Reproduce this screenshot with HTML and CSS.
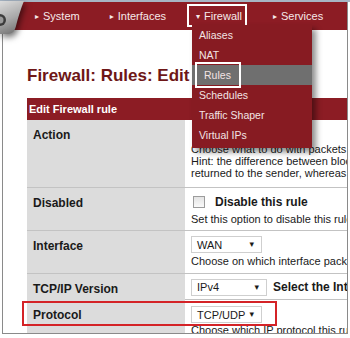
FILE: index.html
```html
<!DOCTYPE html>
<html lang="en">
<head>
    <meta charset="UTF-8">
    <title>Firewall: Rules: Edit</title>
    <link rel="stylesheet" href="styles.css">
</head>
<body>
    <div class="topline"></div>
    <div class="frame">
        <div class="header">
            <ul class="nav">
                <li><span class="arr">&#9656;</span>System</li>
                <li><span class="arr">&#9656;</span>Interfaces</li>
                <li class="open"><span class="arr">&#9662;</span>Firewall
                    <ul class="menu">
                        <li>Aliases</li>
                        <li>NAT</li>
                        <li class="active"><span class="mark">Rules</span></li>
                        <li>Schedules</li>
                        <li>Traffic Shaper</li>
                        <li>Virtual IPs</li>
                    </ul>
                </li>
                <li><span class="arr">&#9656;</span>Services</li>
                <li><span class="arr">&#9656;</span>VPN</li>
            </ul>
        </div>

        <div class="main">
            <h1>Firewall: Rules: Edit</h1>
            <div class="form">
                <div class="form-head">Edit Firewall rule</div>

                <div class="row row-action">
                    <div class="label">Action</div>
                    <div class="field">
                        <div class="desc">Choose what to do with packets that match the criteria specified below.<br>
                        Hint: the difference between block and reject is that with reject, a packet (TCP RST or ICMP port unreachable for UDP) is<br>
                        returned to the sender, whereas with block the packet is dropped silently.</div>
                    </div>
                </div>

                <div class="row">
                    <div class="label">Disabled</div>
                    <div class="field">
                        <div class="check-line"><span class="checkbox"></span><b>Disable this rule</b></div>
                        <div class="desc">Set this option to disable this rule without removing it from the list.</div>
                    </div>
                </div>

                <div class="row">
                    <div class="label">Interface</div>
                    <div class="field">
                        <div class="select sel-wan">WAN<span class="caret">&#9662;</span></div>
                        <div class="desc">Choose on which interface packets must come in to match this rule.</div>
                    </div>
                </div>

                <div class="row row-short">
                    <div class="label">TCP/IP Version</div>
                    <div class="field inline">
                        <div class="select sel-ip">IPv4<span class="caret">&#9662;</span></div>
                        <b>Select the Internet Protocol version this rule applies to</b>
                    </div>
                </div>

                <div class="row row-proto">
                    <div class="label">Protocol</div>
                    <div class="field">
                        <div class="select sel-proto">TCP/UDP<span class="caret">&#9662;</span></div>
                        <div class="desc">Choose which IP protocol this rule should match.</div>
                    </div>
                    <div class="callout"></div>
                </div>
            </div>
        </div>
    </div>

    <svg class="logo" width="32" height="44" viewBox="0 0 32 44">
        <defs>
            <linearGradient id="lg" x1="0" y1="0" x2="0.3" y2="1">
                <stop offset="0" stop-color="#dcdcdc"/>
                <stop offset="0.6" stop-color="#a9a9a9"/>
                <stop offset="1" stop-color="#7c7c7c"/>
            </linearGradient>
        </defs>
        <path d="M0 0 H24 C21 7 18 17 16 25 C14.5 31 12 33 7 33 H0 Z" fill="url(#lg)"/>
        <path d="M0 13 A6 6 0 0 1 0 25 Z" fill="#3c3c3c"/>
        <path d="M0 15.5 A3.5 3.5 0 0 1 0 22.5 Z" fill="#9a9a9a"/>
    </svg>
</body>
</html>
```

FILE: styles.css
```css
* {
    margin: 0;
    padding: 0;
    box-sizing: border-box;
}
body {
    width: 350px;
    height: 338px;
    overflow: hidden;
    position: relative;
    background: #fff;
    font-family: 'Liberation Sans', Arial, sans-serif;
    color: #1a1a1a;
}
.topline {
    height: 2px;
    background: #a7b5c4;
}
.frame {
    margin: 0 2px;
    height: 332px;
    border: 1px solid #8a8a8a;
    border-top: 0;
    overflow: hidden;
    position: relative;
}
.logo {
    position: absolute;
    left: 0;
    top: 1px;
    filter: drop-shadow(2px 3px 3px rgba(0,0,0,0.55));
}
.header {
    height: 28px;
    background: #8c1c24;
}
.nav {
    list-style: none;
    display: flex;
    padding-left: 32px;
    height: 28px;
    align-items: center;
    white-space: nowrap;
}
.nav > li {
    color: #f6e9e9;
    font-size: 11px;
    margin-right: 30px;
    position: relative;
}
.arr {
    font-family: 'DejaVu Sans', sans-serif;
    font-size: 8px;
    margin-right: 4px;
    position: relative;
    top: -1px;
}
.nav > li.open {
    margin-right: 31px;
}
.nav > li.open::after {
    content: "";
    position: absolute;
    left: -9px;
    right: -5px;
    top: -6px;
    bottom: -5px;
    border: 2px solid #fff;
}
.menu {
    list-style: none;
    position: absolute;
    left: -4px;
    top: 15px;
    width: 120px;
    padding-bottom: 3px;
    background: #871b22;
    box-shadow: 4px 4px 6px rgba(0,0,0,0.45);
    z-index: 5;
}
.menu li {
    height: 20px;
    line-height: 20px;
    padding-left: 7px;
    font-size: 10.5px;
    color: #f3e4e4;
}
.menu li.active {
    background: #6f6f6f;
    padding-left: 12px;
}
.mark {
    position: relative;
}
.mark::after {
    content: "";
    position: absolute;
    left: -9px;
    right: -10px;
    top: -7px;
    bottom: -7px;
    border: 2px solid #fff;
}
.main {
    padding-left: 24px;
}
h1 {
    font-size: 17px;
    color: #6e1717;
    margin-top: 36px;
    height: 32px;
    line-height: 20px;
    white-space: nowrap;
}
.form {
    width: 620px;
}
.form-head {
    height: 22px;
    line-height: 22px;
    background: #8c1c24;
    color: #fff;
    font-size: 11px;
    font-weight: bold;
    padding-left: 2px;
}
.row {
    display: grid;
    grid-template-columns: 158px 1fr;
    height: 43px;
    border-bottom: 1px solid #c3c3c3;
    position: relative;
}
.row-action {
    height: 68px;
}
.row-short {
    height: 26px;
}
.row-proto {
    height: 40px;
    border-bottom: 0;
}
.label {
    background: #dcdcdc;
    font-size: 12px;
    font-weight: bold;
    padding: 8px 0 0 6px;
    line-height: 14px;
}
.field {
    padding: 5px 0 0 6px;
    font-size: 11px;
    white-space: nowrap;
}
.desc {
    line-height: 12px;
}
.row-action .field {
    padding-top: 23px;
}
.check-line {
    display: flex;
    align-items: center;
    height: 18px;
    margin-bottom: 2px;
}
.check-line b {
    font-size: 12px;
    margin-left: 10px;
}
.checkbox {
    width: 12px;
    height: 12px;
    margin-left: 2px;
    border: 1px solid #9c9c9c;
    background: linear-gradient(#e4e4e4, #fafafa);
}
.select {
    display: flex;
    align-items: center;
    height: 17px;
    border: 1px solid #cfcfcf;
    background: #fff;
    font-size: 11px;
    padding-left: 5px;
    margin-bottom: 2px;
    position: relative;
}
.caret {
    position: absolute;
    right: 7px;
    top: 2px;
    font-family: 'DejaVu Sans', sans-serif;
    font-size: 9px;
}
.sel-wan,
.sel-proto {
    width: 71px;
}
.sel-ip {
    width: 76px;
    margin: 0 6px 0 0;
}
.inline {
    display: flex;
    align-items: center;
    height: 26px;
    padding-top: 0;
}
.inline b {
    font-size: 12px;
}
.row-proto .field {
    padding-top: 6px;
}
.row-proto .select {
    margin-bottom: 1px;
}
.callout {
    position: absolute;
    left: -5px;
    top: 1px;
    width: 255px;
    height: 25px;
    border: 2px solid #d42327;
}
```
